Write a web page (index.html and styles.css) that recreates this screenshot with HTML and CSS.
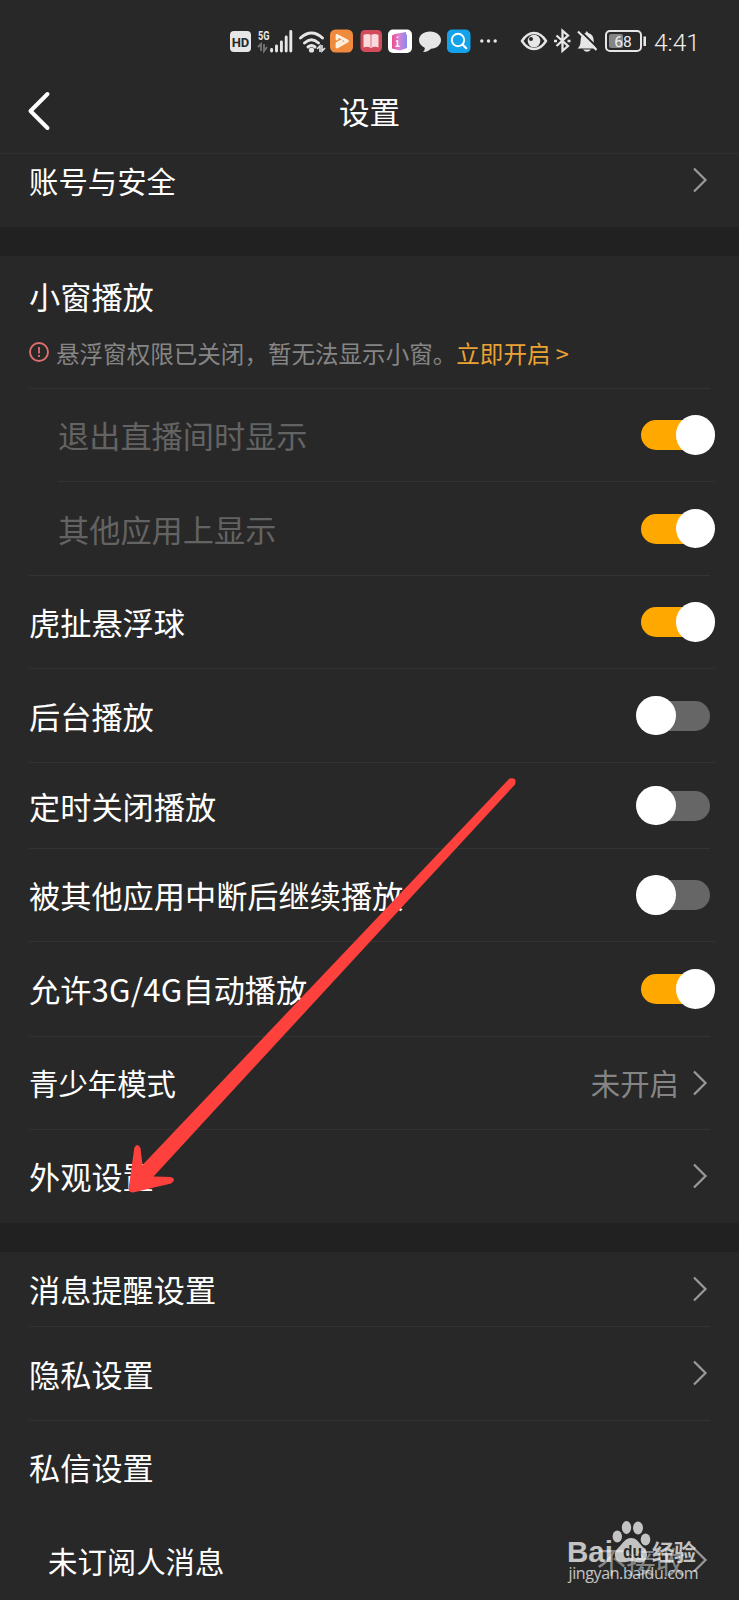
FILE: index.html
```html
<!DOCTYPE html>
<html lang="zh-CN">
<head>
<meta charset="utf-8">
<title>设置</title>
<link rel="stylesheet" href="styles.css">
</head>
<body>
<svg width="0" height="0" class="defs" aria-hidden="true">
  <symbol id="chev" viewBox="0 0 16 28"><path d="M2 2.500 13.500 14 2 25.500" fill="none" stroke="currentColor" stroke-width="2.200"/></symbol>
</svg>
<div class="screen">
  <div class="status">
    <svg viewBox="226 24 28 34" width="28" height="34"><rect x="230" y="31" width="21" height="21" rx="4" fill="#e6e6e6"/><text x="240.500" y="46.500" class="hd">HD</text></svg>
    <svg viewBox="254 24 42 34" width="42" height="34"><text x="258" y="40" class="g5" textLength="11.500" lengthAdjust="spacingAndGlyphs">5G</text><path d="M258 47l3-3v7M267 47l-3 4v-7" fill="none" stroke="#777" stroke-width="1.800"/><path d="M271.600 49.500v1.500M276.500 46v5M281.400 42v9M286.200 37v14M290.800 31.500v19.500" stroke="#e6e6e6" stroke-width="2.900" stroke-linecap="round"/></svg>
    <svg viewBox="296 24 32 34" width="32" height="34"><g fill="none" stroke="#e6e6e6" stroke-width="3" stroke-linecap="round"><path d="M300.500 38q11-10 22 0M304.500 43q7-6.500 14 0"/><path d="M308 47q3.500-3 7 0"/></g><circle cx="311.500" cy="50" r="2.600" fill="#e6e6e6"/><path d="M317 49l3-3v6M325 48l-3 3v-6" fill="none" stroke="#e6e6e6" stroke-width="1.600"/></svg>
    <svg viewBox="328 24 28 34" width="28" height="34"><rect x="330" y="29.500" width="23" height="23" rx="5.500" fill="#f08a3d"/><path d="M337 39v-3.500l10.500 5.500-10.500 6v-3.500l4.500-2.500" fill="none" stroke="#fff1df" stroke-width="2.800" stroke-linejoin="round" stroke-linecap="round"/></svg>
    <svg viewBox="356 24 29 34" width="29" height="34"><rect x="360.500" y="30" width="21.500" height="22" rx="4.500" fill="#d44c5b"/><path d="M363.500 35q4-2 7.500 0 4-2 7.500 0v12.500q-4-1.500-7.500.500-3.500-2-7.500-.500z" fill="#fbdadd"/><path d="M371 35v12" stroke="#db7580"/></svg>
    <svg viewBox="385 24 30 34" width="30" height="34"><defs><linearGradient id="bk"><stop offset="0" stop-color="#ec4f8e"/><stop offset=".5" stop-color="#d781d7"/><stop offset="1" stop-color="#858ceb"/></linearGradient></defs><rect x="388" y="29.500" width="24" height="23.500" rx="5" fill="#fff"/><path d="M392 35.500l3-1.500 11-2v2l1 1v13l-7 2.500-8-2z" fill="url(#bk)"/><path d="M397.500 36.500v1.500M396 41h1.500v5M395.500 46.300h4" fill="none" stroke="#fff" stroke-width="1.500"/></svg>
    <svg viewBox="415 24 29 34" width="29" height="34"><path d="M430 31.500c6.500 0 11 3.700 11 8.500s-4.500 8.700-10 8.700c-2 2-4.500 3.500-8 3.300 1.500-1.200 2-2.700 1.700-4.300-3.500-1.500-5.700-4.200-5.700-7.700 0-4.800 4.500-8.500 11-8.500z" fill="#e6e6e6"/></svg>
    <svg viewBox="444 24 30 34" width="30" height="34"><rect x="447" y="29.500" width="23.500" height="23.500" rx="5" fill="#14a2ea"/><circle cx="458" cy="40" r="6.200" fill="none" stroke="#fff" stroke-width="1.900"/><path d="M462.500 44.500l3.700 3.700" stroke="#fff" stroke-width="2.200" stroke-linecap="round"/></svg>
    <svg viewBox="474 24 44 34" width="44" height="34"><g fill="#e6e6e6"><circle cx="481.800" cy="41" r="1.700"/><circle cx="488.500" cy="41" r="1.700"/><circle cx="495.200" cy="41" r="1.700"/></g></svg>
    <svg viewBox="518 24 33 34" width="33" height="34"><path d="M522 41q5-8 12-8t12 8q-5 8-12 8t-12-8z" fill="none" stroke="#e6e6e6" stroke-width="2.400"/><circle cx="534" cy="41" r="6.300" fill="#e6e6e6"/><circle cx="531" cy="39" r="2" fill="#282828"/></svg>
    <svg viewBox="551 24 23 34" width="23" height="34"><path d="M556.500 35.500l11.500 10.500-5.500 4.800v-20l5.500 4.700-11.500 10.500" fill="none" stroke="#e6e6e6" stroke-width="2.300"/><path d="M554 41h3M567.500 41h3" stroke="#e6e6e6" stroke-width="2.600"/></svg>
    <svg viewBox="574 24 28 34" width="28" height="34"><path d="M577.500 48.500q3-2.500 3-7 0-7.500 5-8.500 1.300-3.500 2.600 0 5.700 1 5.700 8.500 0 4.500 3.200 7z" fill="#e6e6e6"/><path d="M583 49.500h8q-4 4.500-8 0z" fill="#e6e6e6"/><path d="M579.500 30l19 18.500" stroke="#282828" stroke-width="1.800"/><path d="M578 31.500l18.500 18.500" stroke="#e6e6e6" stroke-width="2.200"/></svg>
    <svg viewBox="602 24 50 34" width="50" height="34"><rect x="606" y="31" width="35" height="20" rx="4" fill="none" stroke="#e6e6e6" stroke-width="2"/><rect x="609" y="34" width="14" height="14" rx="2" fill="#858585"/><path d="M644.700 36.500v9.500" stroke="#e6e6e6" stroke-width="2.600"/><text x="623" y="47" class="bat">68</text></svg>
    <span class="time">4:41</span>
  </div>
  <header class="head">
    <svg class="back" viewBox="0 0 24 40" width="24" height="40"><path d="M20.500 3 3.500 20l17 17" fill="none" stroke="#fff" stroke-width="4" stroke-linecap="round" stroke-linejoin="round"/></svg>
    <h1>设置</h1>
  </header>
  <section>
    <div class="row first small"><span>账号与安全</span><svg class="chev"><use href="#chev"/></svg></div>
  </section>
  <section>
    <div class="intro line">
      <h2>小窗播放</h2>
      <p class="hint"><svg viewBox="0 0 22 22" width="22" height="22"><circle cx="11" cy="11" r="9" fill="none" stroke="#e06e6e" stroke-width="1.900"/><path d="M11 6v6.500M11 14v2" stroke="#e06e6e" stroke-width="1.800"/></svg><span>悬浮窗权限已关闭，暂无法显示小窗。</span><a>立即开启 &gt;</a></p>
    </div>
    <div class="row sub line wide"><span>退出直播间时显示</span><i class="sw on"></i></div>
    <div class="row sub h94 line"><span>其他应用上显示</span><i class="sw on"></i></div>
    <div class="row line wide"><span>虎扯悬浮球</span><i class="sw on"></i></div>
    <div class="row h94 line wide"><span>后台播放</span><i class="sw"></i></div>
    <div class="row h86 line"><span>定时关闭播放</span><i class="sw"></i></div>
    <div class="row line wide"><span>被其他应用中断后继续播放</span><i class="sw"></i></div>
    <div class="row h95 line"><span>允许<b>3G/4G</b>自动播放</span><i class="sw on"></i></div>
    <div class="row line small"><span>青少年模式</span><em>未开启</em><svg class="chev"><use href="#chev"/></svg></div>
    <div class="row"><span>外观设置</span><svg class="chev"><use href="#chev"/></svg></div>
  </section>
  <section>
    <div class="row h75 line"><span>消息提醒设置</span><svg class="chev"><use href="#chev"/></svg></div>
    <div class="row h94 line"><span>隐私设置</span><svg class="chev"><use href="#chev"/></svg></div>
    <div class="row"><span>私信设置</span></div>
    <div class="row h94 small inner"><span>未订阅人消息</span><em>不接收</em><svg class="chev"><use href="#chev"/></svg></div>
  </section>
  <svg class="arrow" viewBox="120 770 405 430" width="405" height="430"><path d="M509.500 778.500 142.500 1165 140.500 1148Q137 1142 134.300 1148L128.500 1189Q129 1192.500 133 1192.500L171 1183.500Q177 1179 171 1177L153.500 1176.500 515 784.500Q517.500 777 509.500 778.500Z" fill="#ff413d"/></svg>
  <div class="mark">
    <svg viewBox="560 1515 145 75" width="145" height="75">
      <g fill="#fff"><ellipse cx="617.300" cy="1536.500" rx="4.700" ry="6"/><ellipse cx="626.500" cy="1527.500" rx="4.700" ry="6.500"/><ellipse cx="638" cy="1528" rx="5" ry="6.500"/><ellipse cx="645.500" cy="1539.500" rx="4.800" ry="6"/><path d="M631 1538c6 0 8 5 12 9s5 8 3 12-6 4-10 3-6-1-10 0-9 0-10.500-4 0-8 3.500-11 6-9 12-9z"/></g>
      <text x="567" y="1561.500" class="bai" textLength="46" lengthAdjust="spacingAndGlyphs">Bai</text>
      <text x="623" y="1558" class="du" textLength="19" lengthAdjust="spacingAndGlyphs">du</text>
      <text x="652" y="1559.500" class="jy">经验</text>
      <text x="568.500" y="1579" class="url" textLength="130">jingyan.baidu.com</text>
    </svg>
  </div>
</div>
</body>
</html>
```
FILE: styles.css
```css
* { box-sizing: border-box; }
body {
  margin: 0;
  background: #212121;
  color: #fff;
  font-family: "Noto Sans CJK SC", sans-serif;
}
.defs { position: absolute; }
.screen {
  position: relative;
  width: 739px;
  height: 1600px;
  overflow: hidden;
}
.status {
  display: flex;
  height: 76px;
  padding: 24px 0 0 226px;
  background: #282828;
}
.status svg { flex: none; }
.time {
  margin-left: 2px;
  font: 300 24.500px/37px Roboto, sans-serif;
  color: #eee;
}
.hd { font: bold 13px Roboto, sans-serif; text-anchor: middle; fill: #282828; }
.g5 { font: bold 12.500px Roboto, sans-serif; fill: #e6e6e6; }
.bat { font: 400 15.500px Roboto, sans-serif; text-anchor: middle; fill: #eee; }
.head {
  display: grid;
  grid-template-columns: 100px 1fr 100px;
  align-items: center;
  height: 78px;
  padding-bottom: 7px;
  background: #282828;
  border-bottom: 1px solid #303030;
}
.back { margin-left: 27px; }
h1 {
  margin: 0;
  font-size: 30.600px;
  line-height: 44px;
  font-weight: 400;
  text-align: center;
}
section {
  background: #282828;
  margin-bottom: 29px;
}
.row {
  display: flex;
  align-items: center;
  height: 93px;
  padding: 0 24px 1px 29px;
  font-size: 31.200px;
  line-height: 46px;
}
.row span { flex: 1; white-space: nowrap; }
.row b { font-weight: 400; letter-spacing: .25px; }
.small { font-size: 29.400px; }
.small span, .small em { margin-top: -2px; }
.h94 { height: 94px; }
.h95 { height: 95px; }
.h86 { height: 86px; }
.h75 { height: 75px; }
.first { height: 73px; padding-bottom: 20px; }
.sub { padding-left: 58px; color: #636363; }
.inner { padding-left: 48px; }
.line { background: linear-gradient(#333, #333) 29px 100% / 681px 1px no-repeat; }
.wide { background-size: 686px 1px; }
.sub.wide { background-position: 58px 100%; background-size: 657px 1px; }
.chev {
  width: 16px;
  height: 28px;
  margin: 0 7px 1px 0;
  color: #999;
}
.row em {
  font-style: normal;
  color: #858585;
  margin-right: 13px;
}
.inner em { margin-right: 7px; }
.sw {
  display: flex;
  flex: none;
  align-items: center;
  width: 64px;
  height: 30px;
  margin-right: 5px;
  border-radius: 15px;
  background: #666;
}
.sw::before {
  content: "";
  flex: none;
  width: 39.500px;
  height: 39.500px;
  margin-left: -10px;
  border-radius: 50%;
  background: #fff;
}
.sw.on {
  width: 69px;
  justify-content: flex-end;
  background: #ffa800;
}
.sw.on::before { margin: 0 -5px 0 0; }
.intro {
  height: 133px;
  padding: 17px 24px 0 29px;
}
h2 {
  margin: 0;
  font-size: 31.200px;
  line-height: 46px;
  font-weight: 400;
}
.hint {
  display: flex;
  align-items: center;
  margin: 15px 0 0 -1px;
  height: 37px;
  font-size: 23.550px;
  line-height: 36px;
  color: #858585;
  white-space: nowrap;
}
.hint svg { margin: -1px 6px 0 0; }
.hint a { color: #eba235; }
.arrow { position: absolute; left: 120px; top: 769.500px; }
.mark { position: absolute; left: 560px; top: 1515px; opacity: .72; }
.mark svg { display: block; }
.bai { font: bold 30px "Liberation Sans", sans-serif; fill: #fff; }
.du { font: bold 18px "Liberation Sans", sans-serif; fill: #282828; }
.jy { font: bold 22px "Noto Sans CJK SC", sans-serif; fill: #fff; }
.url { font: 16px "Open Sans", sans-serif; fill: #fff; }
```
